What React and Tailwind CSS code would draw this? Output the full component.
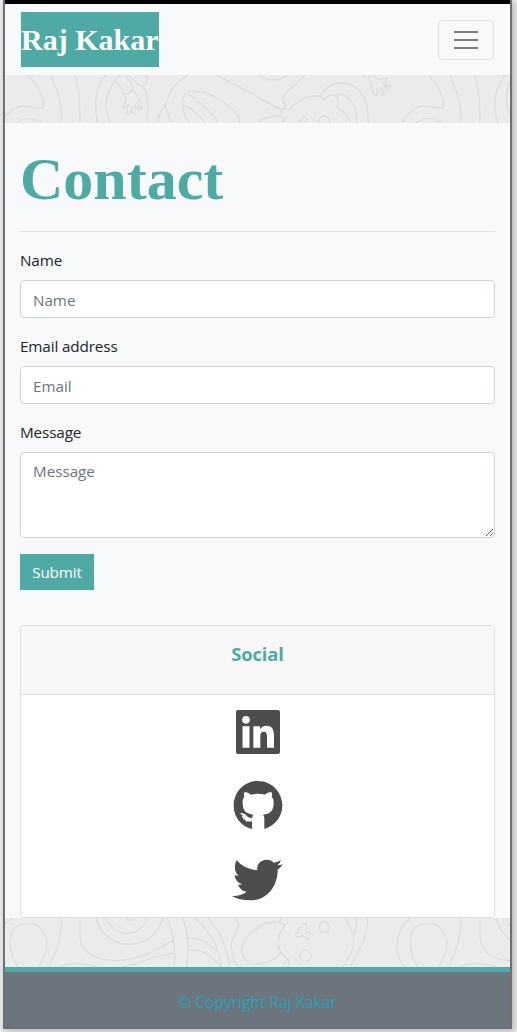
import React from "react";

const stroke = { fill: "none", stroke: "#dcdcdc", strokeWidth: 3.6, strokeLinecap: "round", strokeLinejoin: "round" };

function TopPattern() {
  return (
    <svg className="block h-12 w-full bg-[#ebebeb]" viewBox="15 225 1515 144" preserveAspectRatio="none" {...stroke} aria-hidden="true">
      <path d="M86 225C108 250 131 290 131 316C125 332 104 322 80 318C50 314 28 337 15 350" />
      <path d="M45 369C70 351 105 353 126 369M151 225C174 272 188 315 183 369M223 225C238 260 240 310 240 369" />
      <path d="M318 225C283 257 283 320 292 369M361 225C314 270 309 323 331 369" />
      <path d="M345 245Q366 262 371 283Q388 283 400 266Q391 242 376 225M371 283Q380 291 378 303L367 322Q366 328 373 325L386 312L380 338Q381 346 388 342L397 316L395 337Q398 345 404 337L405 313L412 330Q420 335 418 327L411 307L423 324Q430 329 427 321L413 290Q407 275 398 269" />
      <path d="M386 225Q409 250 425 259Q443 251 443 225M430 225L440 233M425 259C453 280 440 320 440 369" />
      <path d="M564 225C500 265 510 290 491 325C474 345 474 355 475 369M494 312Q505 340 513 369" />
      <path d="M547 313C549 276 566 270 595 275C640 279 713 330 718 355L717 369M547 313C548 337 557 355 570 369M566 283C610 315 640 344 656 369M548 315C580 327 602 350 614 369M649 225L780 294L845 330" />
      <g transform="translate(771 0)">
        <path d="M5 225Q45 255 92 225M143 225C120 260 76 272 77 299Q78 308 87 314L80 324L75 332L0 290M75 332L68 347L84 355L75 369M68 347Q30 350 0 365" />
        <path d="M80 324L98 329C122 300 158 280 190 290L202 299Q213 281 235 287Q250 300 241 324C260 334 276 350 281 369M190 290C207 254 245 242 280 254C324 271 336 321 333 369M235 287C270 270 304 322 298 369" />
        <circle cx="202" cy="364" r="16" />
        <path d="M123 369Q124 359 136 363Q130 351 142 351Q151 352 148 362L143 369M318 225Q330 240 347 225M333 236Q343 246 344 256L349 280Q354 290 360 285L361 266L374 284Q382 288 381 281L370 262L388 273Q397 275 393 268L379 257L398 260Q405 257 397 254L377 248L389 242Q394 235 385 235L369 239Q357 239 350 227" />
        <path d="M515 225C542 250 559 292 561 315C555 331 536 321 509 318C474 315 446 347 433 369M477 369Q515 342 553 369M579 225C599 272 616 315 611 369M652 225C668 266 670 318 668 369M748 225C704 270 710 327 723 369M759 246C743 277 746 321 759 341M739 225L744 231" />
      </g>
    </svg>
  );
}

function BottomPattern() {
  return (
    <svg className="block h-[49px] w-full bg-[#ebebeb]" viewBox="15 54 1515 147" preserveAspectRatio="none" {...stroke} aria-hidden="true">
      <path d="M15 71L35 54M53 201C27 161 25 111 40 88Q69 64 109 76L127 88L137 111Q144 129 140 145Q133 174 114 201M184 54C185 110 169 164 143 201M240 54V114C244 164 301 182 348 182C406 182 454 158 496 134L521 121M180 198Q230 180 290 201" />
      <path d="M287 54C302 105 343 135 390 133C447 129 474 100 488 54M318 54C333 86 352 101 381 101C412 99 436 79 441 54M380 56Q382 63 388 61L391 56M395 60Q402 61 402 54M502 54Q530 130 522 201M549 54Q574 128 559 201M365 201C416 193 466 165 522 159M563 116Q606 112 638 143L654 155M566 150C607 145 637 171 665 201" />
      <path d="M584 54C640 103 657 150 665 201M623 54C669 103 680 152 690 201M706 54L718 77C710 96 694 115 694 138Q697 176 714 201M690 178L700 187M780 82C733 102 710 149 736 178Q753 197 780 190" />
      <g transform="translate(771 0)">
        <path d="M0 82Q33 64 65 67L75 54M65 67L85 75C60 105 58 139 71 155L98 183L92 201M90 178L76 201M0 190Q44 191 73 157M257 201C297 147 296 115 284 90Q270 68 268 54M298 54Q300 89 290 107M332 54C332 110 304 160 279 201" />
        <circle cx="202" cy="81" r="16" />
        <circle cx="146" cy="167" r="17" />
        <path d="M117 108Q112 99 124 97Q121 80 134 82Q134 69 144 70Q151 73 148 83Q145 91 149 96L169 104M117 108Q123 112 133 107Q149 110 155 119" />
        <path d="M459 54C420 85 414 142 425 169Q431 187 442 201M482 201C457 161 454 111 469 88Q498 64 538 76L556 88L566 111Q573 129 569 145Q562 174 543 201M613 54C610 110 597 164 572 201M669 54V114C674 162 716 179 759 182M609 198Q659 180 719 201M716 54Q731 98 759 119M747 54Q750 73 759 78" />
      </g>
    </svg>
  );
}

function LinkedInIcon() {
  return (
    <svg className="block size-[60px]" viewBox="0 0 180 180" aria-hidden="true">
      <rect x="24" y="18" width="132" height="132" rx="6" fill="#4d4d4d" />
      <circle cx="54" cy="47.5" r="11.5" fill="white" />
      <path fill="white" d="M43.500 67H64.500V131H43.500ZM76 67H96V76C101 68 108 65 115 65C133 65 138 77 138 97V131H117V100C117 89 115 83 107 83C99 83 97 90 97 99V131H76Z" />
    </svg>
  );
}

function GitHubIcon() {
  return (
    <svg className="block size-[60px]" viewBox="0 0 180 180" aria-hidden="true">
      <path fill="#4d4d4d" d="M72 159C40 151 17 123 17 89C17 48 49 15 90 15C131 15 163 48 163 89C163 121 141 149 109 159V131C109 124 108 119 105 116C126 114 137 104 137 81C137 73 136 67 131 63C133 57 133 52 130 48C123 48 116 51 111 56Q90 51 69 56C62 51 56 48 50 48C47 52 48 58 49 63C45 68 43 74 44 82C44 104 55 114 76 116Q73 119 73 125Q61 128 54 117Q48 110 38 112Q46 118 50 127Q56 140 72 136Z" />
      <path d="M38 112Q46 115 50 123Q56 135 72 132M43 120L49 130M51 128L57 137" fill="none" stroke="white" strokeWidth="4" />
    </svg>
  );
}

function TwitterIcon() {
  return (
    <svg className="block size-[60px]" viewBox="0 0 180 180" aria-hidden="true">
      <path fill="#4d4d4d" d="M26 30C39 47 60 58 88 61C85 42 99 29 116 29C126 29 131 32 138 38Q149 36 159 30Q156 41 148 46Q156 46 164 43Q159 53 149 59C149 108 118 151 67 151Q34 151 12 138Q37 139 56 125Q37 122 30 104Q37 105 43 103Q21 96 20 74Q26 78 32 77C18 66 18 47 26 30Z" />
    </svg>
  );
}

const control = "block w-full rounded-[4px] border border-[#ced4da] bg-white px-3 text-[15.2px] text-[#495057] placeholder:text-[#6c757d] placeholder:opacity-100 outline-none";

function Field({ label, id, children }) {
  return (
    <div className="mb-4">
      <label htmlFor={id} className="mb-2 block h-6 text-[15.3px] leading-6 tracking-[-0.15px]">{label}</label>
      {children}
    </div>
  );
}

export default function App() {
  return (
    <div className="h-[1032px] w-full overflow-hidden bg-[#ececec] pl-[3px] font-['Open_Sans',sans-serif] text-[#212529]">
      <div className="flex h-[1029px] w-[509px] flex-col border-x-2 border-b-2 border-[#707070] bg-[#f8f9fa] shadow-[2px_2px_7px_rgba(0,0,0,0.25)]">
        <div className="h-1 shrink-0 bg-black" />
        <nav className="flex h-[71px] shrink-0 items-center justify-between bg-[#f8f9fb] px-4">
          <a href="#home" className="flex h-[55px] w-[138px] items-center whitespace-nowrap bg-[#4faaa6] font-['Liberation_Serif',serif] text-[30px] font-bold text-white">Raj Kakar</a>
          <button aria-label="Menu" className="flex h-10 w-14 flex-col items-center justify-center gap-[6px] rounded-[4px] border border-[#dfe0e1]">
            <span className="h-[2px] w-6 bg-[#7c7c7d]" />
            <span className="h-[2px] w-6 bg-[#7c7c7d]" />
            <span className="h-[2px] w-6 bg-[#7c7c7d]" />
          </button>
        </nav>
        <TopPattern />
        <main className="h-[795px] shrink-0 bg-[#f8f9fb] px-[15px]">
          <h1 className="flex h-[108px] items-center pt-1 font-['Liberation_Serif',serif] text-[60px] font-bold leading-[72px] text-[#4faaa6]">Contact</h1>
          <hr className="mb-4 border-[#dfe0e2]" />
          <form onSubmit={(e) => e.preventDefault()}>
            <Field label="Name" id="name"><input id="name" placeholder="Name" className={`${control} h-[38px] pt-px`} /></Field>
            <Field label="Email address" id="email"><input id="email" placeholder="Email" className={`${control} h-[38px] pt-px`} /></Field>
            <Field label="Message" id="message"><textarea id="message" placeholder="Message" className={`${control} h-[86px] resize-y pt-[6px] leading-6`} /></Field>
            <button className="block h-9 w-[74px] bg-[#4faaa6] text-[15.2px] tracking-[-0.1px] text-white">Submit</button>
          </form>
          <section className="mt-[35px] h-[293px] overflow-hidden rounded-[4px] border border-[#dfdfdf] bg-white">
            <h2 className="h-[69px] border-b border-[#dfdfdf] bg-[#f7f7f7] pt-[15px] text-center text-[18.4px] font-bold leading-[26px] tracking-[-0.1px] text-[#4faaa6]">Social</h2>
            <div className="flex flex-col items-center pl-px pt-[9px]">
              <a href="#linkedin" aria-label="LinkedIn" className="mb-3"><LinkedInIcon /></a>
              <a href="#github" aria-label="GitHub" className="mb-[14px]"><GitHubIcon /></a>
              <a href="#twitter" aria-label="Twitter"><TwitterIcon /></a>
            </div>
          </section>
        </main>
        <BottomPattern />
        <footer className="flex flex-1 items-center justify-center border-t-[5px] border-[#4faaa6] bg-[#6c757d] pt-[6px] text-[15.6px] tracking-[-0.05px] text-[#299fb9]">© Copyright Raj Kakar</footer>
      </div>
    </div>
  );
}
